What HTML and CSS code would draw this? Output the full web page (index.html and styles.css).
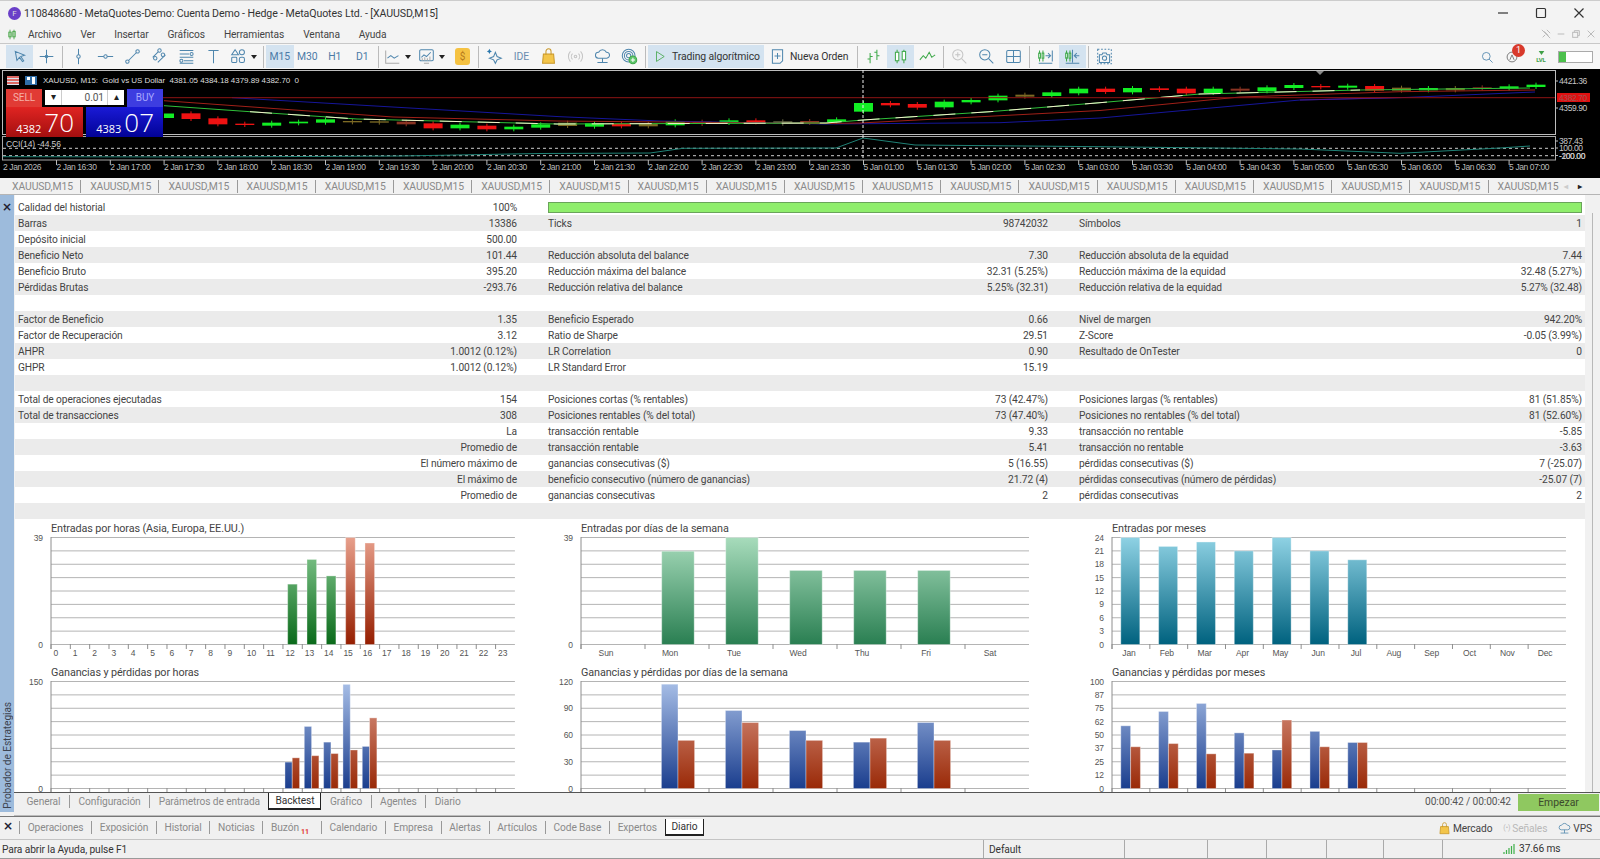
FILE: index.html
```html
<!DOCTYPE html>
<html lang="es">
<head>
  <meta charset="utf-8">
  <title>MetaTrader 5</title>
  <link rel="stylesheet" href="styles.css">
</head>
<body>

  <div class="titlebar">
    <span class="app-logo">F</span>
    <span class="title-text">110848680 - MetaQuotes-Demo: Cuenta Demo - Hedge - MetaQuotes Ltd. - [XAUUSD,M15]</span>
    <div class="win-buttons">
      <svg viewBox="0 0 12 12"><path d="M1 6h10"/></svg>
      <svg viewBox="0 0 12 12"><rect x="1.5" y="1.5" width="9" height="9" rx="1"/></svg>
      <svg viewBox="0 0 12 12"><path d="M1.5 1.5l9 9M10.5 1.5l-9 9"/></svg>
    </div>
  </div>

  <div class="menubar">
    <svg class="menu-logo" viewBox="0 0 10 12"><path d="M2.5 0v12M7.5 0v12"/><rect x="1" y="3" width="3" height="6"/><rect x="6" y="2" width="3" height="7"/></svg>
    <span>Archivo</span><span>Ver</span><span>Insertar</span><span>Gráficos</span><span>Herramientas</span><span>Ventana</span><span>Ayuda</span>
    <div class="child-buttons">
      <svg viewBox="0 0 12 12"><path d="M2 10l3-3M4 3l5 5M7 1l4 4M1 1l10 10"/></svg>
      <svg viewBox="0 0 12 12"><path d="M2 6h8"/></svg>
      <svg viewBox="0 0 12 12"><rect x="2" y="4" width="6" height="6"/><path d="M4 4V2h6v6H8"/></svg>
      <svg viewBox="0 0 12 12"><path d="M2 2l8 8M10 2l-8 8"/></svg>
    </div>
  </div>

  <div class="toolbar">
    <div class="tool active"><svg class="ico" viewBox="0 0 20 20"><path d="M5 4l11 4.500-4.500 1.500 3.500 5-1.500 1-3.500-5-3 3.500z"/></svg></div>
    <div class="tool"><svg class="ico" viewBox="0 0 20 20"><path d="M10 2v16M2 10h16"/><circle cx="10" cy="10" r="1.5"/></svg></div>
    <i class="sep"></i>
    <div class="tool"><svg class="ico" viewBox="0 0 20 20"><path d="M10 1v18"/><circle class="dot" cx="10" cy="10" r="2"/></svg></div>
    <div class="tool"><svg class="ico" viewBox="0 0 20 20"><path d="M1 10h18"/><circle class="dot" cx="10" cy="10" r="2"/></svg></div>
    <div class="tool"><svg class="ico" viewBox="0 0 20 20"><path d="M5 15L15 5"/><circle class="dot" cx="4" cy="16" r="2"/><circle class="dot" cx="16" cy="4" r="2"/></svg></div>
    <div class="tool"><svg class="ico" viewBox="0 0 20 20"><path d="M2 11l7-7M8 17l9-9"/><circle class="dot" cx="10" cy="3" r="2"/><circle class="dot" cx="5" cy="12" r="2"/><circle class="dot" cx="14" cy="8" r="2"/></svg></div>
    <div class="tool"><svg class="ico" viewBox="0 0 20 20"><path d="M2 3h16M2 7h11M2 11h16M7 15h11M2 18h16"/><circle class="dot" cx="16" cy="7" r="1.8"/><circle class="dot" cx="4" cy="15" r="1.8"/></svg></div>
    <div class="tool"><svg class="ico" viewBox="0 0 20 20"><path d="M4 3h12M10 3v15"/></svg></div>
    <div class="tool sm"><svg class="ico" viewBox="0 0 20 20"><path d="M6 2l4 6H2z"/><circle cx="14" cy="5" r="3"/><rect x="2" y="11" width="6" height="6" rx="1"/><rect x="11" y="11" width="6" height="6" rx="2"/></svg></div>
    <div class="caret"></div>
    <i class="sep"></i>
    <div class="tool tf active">M15</div>
    <div class="tool tf">M30</div>
    <div class="tool tf">H1</div>
    <div class="tool tf">D1</div>
    <i class="sep"></i>
    <div class="tool sm"><svg class="ico" viewBox="0 0 20 20"><path d="M2 3v15h16" class="grey"/><path d="M4 12l4-3 4 3 5-3"/></svg></div>
    <div class="caret"></div>
    <div class="tool sm"><svg class="ico" viewBox="0 0 20 20"><rect x="2" y="2" width="16" height="13" rx="1.5"/><path d="M4 11l3-3 3 2 5-5"/><path class="grey" d="M5 15v-3M8 15v-4M11 15v-3M14 15v-5M7 18h6"/></svg></div>
    <div class="caret"></div>
    <div class="tool"><span class="coin">$</span></div>
    <i class="sep"></i>
    <div class="tool"><svg class="ico" viewBox="0 0 20 20"><path d="M11 5l2 5 5 2-5 2-2 4-2-4-5-2 5-2z"/><path class="solid" d="M4 1l1 2 2 1-2 1-1 2-1-2-2-1 2-1z"/></svg></div>
    <div class="tool ide">IDE</div>
    <div class="tool"><svg class="ico bag" viewBox="0 0 20 20"><path class="bag-fill" d="M4 7h12l1 11H3z"/><path d="M7 8V4a3 3 0 0 1 6 0v4"/></svg></div>
    <div class="tool"><svg class="ico faded" viewBox="0 0 20 20"><circle cx="10" cy="10" r="1.5"/><path d="M6.5 6.5a5 5 0 0 0 0 7M13.5 6.5a5 5 0 0 1 0 7M4 4a9 9 0 0 0 0 12M16 4a9 9 0 0 1 0 12"/></svg></div>
    <div class="tool"><svg class="ico" viewBox="0 0 20 20"><path d="M5 12a3.5 3.5 0 0 1 .5-7 5 5 0 0 1 9 0 3.5 3.5 0 0 1 .5 7z"/><path d="M10 12v5M4 17h12"/></svg></div>
    <div class="tool"><svg class="ico" viewBox="0 0 20 20"><circle cx="9" cy="9" r="7.5"/><circle cx="9" cy="9" r="5"/><circle cx="9" cy="9" r="2.5"/><circle class="plus-disc" cx="14" cy="14" r="4.5"/><path class="plus" d="M14 11.5v5M11.5 14h5"/></svg></div>
    <i class="sep"></i>
    <div class="tool algo active"><svg class="ico play" viewBox="0 0 20 20"><path d="M5 3l11 7-11 7z"/></svg><span>Trading algorítmico</span></div>
    <div class="tool order"><svg class="ico" viewBox="0 0 20 20"><path d="M4 2h12v13l-3 3H4z"/><path d="M10 6v7M6.5 9.5h7"/></svg><span>Nueva Orden</span></div>
    <i class="sep"></i>
    <div class="tool"><svg class="ico green" viewBox="0 0 20 20"><path d="M6 6v12M3 13h3M6 10h3M14 2v12M11 5h3M14 9h3"/></svg></div>
    <div class="tool active"><svg class="ico green" viewBox="0 0 20 20"><path d="M6 2v16M14 2v16"/><rect class="white" x="4" y="5" width="4" height="10"/><rect class="white" x="12" y="4" width="4" height="10"/></svg></div>
    <div class="tool"><svg class="ico green" viewBox="0 0 20 20"><path d="M1 14l4-5 3 3 4-7 3 6 4-3"/></svg></div>
    <i class="sep"></i>
    <div class="tool"><svg class="ico faded" viewBox="0 0 20 20"><circle cx="8" cy="8" r="6"/><path d="M12.5 12.5L18 18M8 5v6M5 8h6"/></svg></div>
    <div class="tool"><svg class="ico" viewBox="0 0 20 20"><circle cx="8" cy="8" r="6"/><path d="M12.5 12.5L18 18M5 8h6"/></svg></div>
    <div class="tool"><svg class="ico" viewBox="0 0 20 20"><rect x="2" y="3" width="16" height="14" rx="1.5"/><path d="M10 3v14M2 10h16"/></svg></div>
    <i class="sep"></i>
    <div class="tool"><svg class="ico green" viewBox="0 0 20 20"><path d="M3 3v13M7 3v13"/><rect class="white" x="2" y="6" width="2" height="6"/><rect class="white" x="6" y="6" width="2" height="6"/><path class="blue" d="M10 9h6M13 6l3 3-3 3M18 3v13M2 18h16"/></svg></div>
    <div class="tool active"><svg class="ico green" viewBox="0 0 20 20"><path d="M3 3v13M7 3v13"/><rect class="white" x="2" y="6" width="2" height="6"/><rect class="white" x="6" y="6" width="2" height="6"/><path class="blue" d="M18 9h-5M15 6l-3 3 3 3M10 2v15M2 18h16"/></svg></div>
    <i class="sep"></i>
    <div class="tool"><svg class="ico" viewBox="0 0 20 20"><rect class="dashed" x="2" y="1.5" width="16" height="17"/><path d="M4 8h3l1-2h4l1 2h3v9H4z"/><circle cx="10" cy="12" r="2.5"/></svg></div>
    <div class="toolbar-right">
      <svg class="ico search" viewBox="0 0 20 20"><circle cx="9" cy="9" r="5.5"/><path d="M13 13l5 5"/></svg>
      <div class="notify">
        <svg class="ico grey-ico" viewBox="0 0 20 20"><circle cx="10" cy="10" r="7"/><path d="M7 14l3-7 3 7"/></svg>
        <span class="badge">1</span>
      </div>
      <div class="lvl"><svg viewBox="0 0 10 8"><path d="M1 1h8L5 7z"/></svg><span>LVL</span></div>
      <div class="battery"><i></i></div>
    </div>
  </div>

  <div class="market">
    <svg id="marketChart" class="market-svg" viewBox="0 69 1600 109" width="1600" height="109"></svg>
    <div class="legend">
      <svg viewBox="0 0 12 9"><rect width="12" height="9" fill="#d9e4ef"/><path d="M0 1h12M0 4h12M0 7h12" stroke="#e0433a" stroke-width="1.5"/></svg>
      <svg viewBox="0 0 12 9"><rect width="12" height="9" fill="#2f6ea8"/><rect x="2" y="1" width="3" height="3" fill="#fff"/><rect x="7" y="1" width="3" height="7" fill="#fff"/></svg>
      <span>XAUUSD, M15:&nbsp; Gold vs US Dollar&nbsp; 4381.05 4384.18 4379.89 4382.70&nbsp; 0</span>
    </div>
    <div class="trade-panel">
      <div class="trade-top">
        <div class="trade-btn sell">SELL</div>
        <div class="lot">
          <span class="lot-arrow">▾</span>
          <span class="lot-value">0.01</span>
          <span class="lot-arrow">▴</span>
        </div>
        <div class="trade-btn buy">BUY</div>
      </div>
      <div class="trade-prices">
        <div class="price red"><small>4382</small><b>70</b></div>
        <div class="price blue"><small>4383</small><b>07</b></div>
      </div>
    </div>
    <div class="cci-label">CCI(14) -44.56</div>
  </div>

  <div class="chart-tabs">
    <span>XAUUSD,M15</span><span>XAUUSD,M15</span><span>XAUUSD,M15</span><span>XAUUSD,M15</span><span>XAUUSD,M15</span>
    <span>XAUUSD,M15</span><span>XAUUSD,M15</span><span>XAUUSD,M15</span><span>XAUUSD,M15</span><span>XAUUSD,M15</span>
    <span>XAUUSD,M15</span><span>XAUUSD,M15</span><span>XAUUSD,M15</span><span>XAUUSD,M15</span><span>XAUUSD,M15</span>
    <span>XAUUSD,M15</span><span>XAUUSD,M15</span><span>XAUUSD,M15</span><span>XAUUSD,M15</span><span>XAUUSD,M15</span>
    <div class="tab-arrows"><b class="off">◂</b><b>▸</b></div>
  </div>

  <div class="tester">
    <div class="side-strip">
      <span class="close-x">×</span>
      <span class="side-label">Probador de Estrategias</span>
    </div>
    <div class="tester-main">
      <div class="report-wrap">
        <div class="report">
          <div class="row">
            <div class="cell"><span>Calidad del historial</span><span>100%</span></div>
            <div class="quality"></div>
          </div>
          <div class="row">
            <div class="cell"><span>Barras</span><span>13386</span></div>
            <div class="cell"><span>Ticks</span><span>98742032</span></div>
            <div class="cell"><span>Símbolos</span><span>1</span></div>
          </div>
          <div class="row">
            <div class="cell"><span>Depósito inicial</span><span>500.00</span></div>
            <div class="cell"></div><div class="cell"></div>
          </div>
          <div class="row">
            <div class="cell"><span>Beneficio Neto</span><span>101.44</span></div>
            <div class="cell"><span>Reducción absoluta del balance</span><span>7.30</span></div>
            <div class="cell"><span>Reducción absoluta de la equidad</span><span>7.44</span></div>
          </div>
          <div class="row">
            <div class="cell"><span>Beneficio Bruto</span><span>395.20</span></div>
            <div class="cell"><span>Reducción máxima del balance</span><span>32.31 (5.25%)</span></div>
            <div class="cell"><span>Reducción máxima de la equidad</span><span>32.48 (5.27%)</span></div>
          </div>
          <div class="row">
            <div class="cell"><span>Pérdidas Brutas</span><span>-293.76</span></div>
            <div class="cell"><span>Reducción relativa del balance</span><span>5.25% (32.31)</span></div>
            <div class="cell"><span>Reducción relativa de la equidad</span><span>5.27% (32.48)</span></div>
          </div>
          <div class="row"></div>
          <div class="row">
            <div class="cell"><span>Factor de Beneficio</span><span>1.35</span></div>
            <div class="cell"><span>Beneficio Esperado</span><span>0.66</span></div>
            <div class="cell"><span>Nivel de margen</span><span>942.20%</span></div>
          </div>
          <div class="row">
            <div class="cell"><span>Factor de Recuperación</span><span>3.12</span></div>
            <div class="cell"><span>Ratio de Sharpe</span><span>29.51</span></div>
            <div class="cell"><span>Z-Score</span><span>-0.05 (3.99%)</span></div>
          </div>
          <div class="row">
            <div class="cell"><span>AHPR</span><span>1.0012 (0.12%)</span></div>
            <div class="cell"><span>LR Correlation</span><span>0.90</span></div>
            <div class="cell"><span>Resultado de OnTester</span><span>0</span></div>
          </div>
          <div class="row">
            <div class="cell"><span>GHPR</span><span>1.0012 (0.12%)</span></div>
            <div class="cell"><span>LR Standard Error</span><span>15.19</span></div>
            <div class="cell"></div>
          </div>
          <div class="row"></div>
          <div class="row">
            <div class="cell"><span>Total de operaciones ejecutadas</span><span>154</span></div>
            <div class="cell"><span>Posiciones cortas (% rentables)</span><span>73 (42.47%)</span></div>
            <div class="cell"><span>Posiciones largas (% rentables)</span><span>81 (51.85%)</span></div>
          </div>
          <div class="row">
            <div class="cell"><span>Total de transacciones</span><span>308</span></div>
            <div class="cell"><span>Posiciones rentables (% del total)</span><span>73 (47.40%)</span></div>
            <div class="cell"><span>Posiciones no rentables (% del total)</span><span>81 (52.60%)</span></div>
          </div>
          <div class="row">
            <div class="cell"><span></span><span>La</span></div>
            <div class="cell"><span>transacción rentable</span><span>9.33</span></div>
            <div class="cell"><span>transacción no rentable</span><span>-5.85</span></div>
          </div>
          <div class="row">
            <div class="cell"><span></span><span>Promedio de</span></div>
            <div class="cell"><span>transacción rentable</span><span>5.41</span></div>
            <div class="cell"><span>transacción no rentable</span><span>-3.63</span></div>
          </div>
          <div class="row">
            <div class="cell"><span></span><span>El número máximo de</span></div>
            <div class="cell"><span>ganancias consecutivas ($)</span><span>5 (16.55)</span></div>
            <div class="cell"><span>pérdidas consecutivas ($)</span><span>7 (-25.07)</span></div>
          </div>
          <div class="row">
            <div class="cell"><span></span><span>El máximo de</span></div>
            <div class="cell"><span>beneficio consecutivo (número de ganancias)</span><span>21.72 (4)</span></div>
            <div class="cell"><span>pérdidas consecutivas (número de pérdidas)</span><span>-25.07 (7)</span></div>
          </div>
          <div class="row">
            <div class="cell"><span></span><span>Promedio de</span></div>
            <div class="cell"><span>ganancias consecutivas</span><span>2</span></div>
            <div class="cell"><span>pérdidas consecutivas</span><span>2</span></div>
          </div>
          <div class="row"></div>

          <div class="charts">
            <div class="stat-chart"><h4>Entradas por horas (Asia, Europa, EE.UU.)</h4><svg id="chartHours"></svg></div>
            <div class="stat-chart"><h4>Entradas por días de la semana</h4><svg id="chartDays"></svg></div>
            <div class="stat-chart"><h4>Entradas por meses</h4><svg id="chartMonths"></svg></div>
            <div class="stat-chart"><h4>Ganancias y pérdidas por horas</h4><svg id="plHours"></svg></div>
            <div class="stat-chart"><h4>Ganancias y pérdidas por días de la semana</h4><svg id="plDays"></svg></div>
            <div class="stat-chart"><h4>Ganancias y pérdidas por meses</h4><svg id="plMonths"></svg></div>
          </div>
        </div>
        <div class="report-scroll"><i></i></div>
      </div>

      <div class="tester-tabs tabs">
        <span class="tab">General</span>
        <span class="tab">Configuración</span>
        <span class="tab">Parámetros de entrada</span>
        <span class="tab on">Backtest</span>
        <span class="tab">Gráfico</span>
        <span class="tab">Agentes</span>
        <span class="tab">Diario</span>
        <span class="timer">00:00:42 / 00:00:42</span>
        <button class="start-btn">Empezar</button>
      </div>
    </div>
  </div>

  <div class="bottom-tabs tabs">
    <span class="close-x dark">×</span>
    <span class="tab">Operaciones</span>
    <span class="tab">Exposición</span>
    <span class="tab">Historial</span>
    <span class="tab">Noticias</span>
    <span class="tab mail">Buzón<sub>11</sub></span>
    <span class="tab">Calendario</span>
    <span class="tab">Empresa</span>
    <span class="tab">Alertas</span>
    <span class="tab">Artículos</span>
    <span class="tab">Code Base</span>
    <span class="tab">Expertos</span>
    <span class="tab on">Diario</span>
    <div class="services">
      <span><svg class="ico bag" viewBox="0 0 20 20"><path class="bag-fill" d="M4 7h12l1 11H3z"/><path d="M7 8V4a3 3 0 0 1 6 0v4"/></svg>Mercado</span>
      <span class="off"><small>(•)</small> Señales</span>
      <span><svg class="ico" viewBox="0 0 20 20"><path d="M5 12a3.5 3.5 0 0 1 .5-7 5 5 0 0 1 9 0 3.5 3.5 0 0 1 .5 7z"/><path d="M10 12v5M4 17h12"/></svg>VPS</span>
    </div>
  </div>

  <div class="statusbar">
    <div>Para abrir la Ayuda, pulse F1</div>
    <div>Default</div>
    <div></div><div></div><div></div><div></div><div></div>
    <div class="ping"><svg viewBox="0 0 12 10"><path d="M1 10V8M3.5 10V6M6 10V4M8.5 10V2M11 10V0"/></svg>37.66 ms</div>
  </div>

  <script src="script.js"></script>
</body>
</html>
```

FILE: styles.css
```css
* {
  box-sizing: border-box;
}

html, body {
  margin: 0;
  width: 1600px;
  height: 859px;
  overflow: hidden;
}

body {
  font-family: Roboto, sans-serif;
  font-size: 10.2px;
  letter-spacing: -0.1px;
  color: #444;
  background-color: #f1f1f1;
}

/* title + menu */
.titlebar {
  height: 27px;
  display: flex;
  align-items: center;
  padding: 0 0 2px 8px;
  background-color: #f3f3f3;
  border-top: 1px solid #ccc;
}

.app-logo {
  width: 13px;
  height: 13px;
  border-radius: 50%;
  background-color: #6a3fc8;
  color: #ddd;
  font-size: 8px;
  line-height: 13px;
  text-align: center;
  margin-right: 3px;
}

.title-text {
  font-size: 10.6px;
  color: #333;
}

.win-buttons {
  margin-left: auto;
  display: flex;
  gap: 26px;
  padding-right: 15px;
}

.win-buttons svg {
  width: 12px;
  height: 12px;
  fill: none;
  stroke: #333;
  stroke-width: 1.2;
}

.menubar {
  height: 17px;
  display: flex;
  align-items: center;
  gap: 19px;
  padding: 0 0 2px 28px;
  position: relative;
  background-color: #f3f3f3;
  border-bottom: 1px solid #c8c8c8;
  color: #444;
}

.menu-logo {
  width: 8px;
  height: 11px;
  position: absolute;
  left: 8px;
  top: 2px;
  fill: none;
  stroke: #3aa03a;
}

.child-buttons {
  margin-left: auto;
  display: flex;
  gap: 5px;
  padding-right: 4px;
}

.child-buttons svg {
  width: 10px;
  height: 10px;
  fill: none;
  stroke: #bbb;
  stroke-width: 1.2;
}

/* toolbar */
.toolbar {
  height: 25px;
  display: flex;
  align-items: center;
  padding-left: 6px;
  background-color: #f6f6f6;
}

.tool {
  width: 27px;
  height: 23px;
  flex: none;
  display: flex;
  align-items: center;
  justify-content: center;
  font-size: 10.4px;
  color: #4b7aa6;
}

.tool.sm {
  width: 23px;
}

.tool.tf {
  width: 27.5px;
}

.tool.active {
  background-color: #d4e3f0;
}

.caret {
  width: 11px;
  flex: none;
  height: 4px;
  position: relative;
}

.caret::after {
  content: "";
  position: absolute;
  left: 1px;
  top: 0;
  border-left: 3px solid transparent;
  border-right: 3px solid transparent;
  border-top: 4px solid #222;
}

.sep {
  width: 1px;
  height: 22px;
  flex: none;
  margin: 0 2px;
  background-color: #bbb;
}

.ico {
  width: 17px;
  height: 17px;
  fill: none;
  stroke: #4f86ad;
  stroke-width: 1.2;
}

.ico .dot {
  fill: #f6f6f6;
}

.ico .grey {
  stroke: #aaa;
}

.ico .solid {
  fill: #2b78ad;
  stroke: none;
}

.ico.faded {
  stroke: #c4c4c4;
}

.ico.bag {
  stroke: #c9982a;
}

.ico .bag-fill {
  fill: #f3c54a;
}

.ico.green {
  stroke: #3da848;
}

.ico .white {
  fill: #fff;
}

.ico .blue {
  stroke: #4f86ad;
}

.ico .plus-disc {
  fill: #5ec46a;
  stroke: #3da848;
}

.ico .plus {
  stroke: #fff;
}

.ico.play {
  stroke: #47a84f;
  width: 14px;
}

.ico .dashed {
  stroke-dasharray: 2 2;
}

.coin {
  width: 15px;
  height: 17px;
  border-radius: 3px;
  background-color: #f5c242;
  color: #b5791a;
  font-size: 10px;
  line-height: 17px;
  text-align: center;
}

.ide {
  color: #6a8caf;
}

.tool.algo {
  width: 116px;
  justify-content: flex-start;
  padding-left: 5px;
  gap: 5px;
  color: #333;
}

.tool.order {
  width: 91px;
  justify-content: flex-start;
  padding-left: 5px;
  gap: 4px;
  color: #333;
}

.toolbar-right {
  margin-left: auto;
  display: flex;
  align-items: center;
  padding-right: 7px;
}

.search {
  width: 14px;
  height: 14px;
}

.notify {
  margin-left: 11px;
  width: 26px;
  position: relative;
}

.grey-ico {
  stroke: #666;
  width: 14px;
  height: 14px;
  display: block;
}

.badge {
  position: absolute;
  left: 7px;
  top: -6px;
  width: 13px;
  height: 13px;
  border-radius: 50%;
  background-color: #d8392b;
  color: #fff;
  font-size: 9px;
  line-height: 13px;
  text-align: center;
}

.lvl {
  width: 20px;
  margin-right: 7px;
  color: #3fa048;
  font-size: 6px;
  line-height: 7px;
  text-align: center;
  font-weight: 700;
}

.lvl svg {
  display: block;
  width: 7px;
  height: 6px;
  margin: 0 auto;
  fill: #3fa048;
}

.battery {
  width: 35px;
  height: 12px;
  border: 1px solid #aaa;
  background-color: #fff;
}

.battery i {
  display: block;
  width: 7px;
  height: 100%;
  background-color: #4cc04c;
}

/* chart */
.market {
  height: 109px;
  position: relative;
  background-color: #000;
  overflow: hidden;
}

.market-svg {
  display: block;
  font-family: "Liberation Sans", sans-serif;
  font-size: 8.5px;
  letter-spacing: -0.4px;
}

.legend {
  position: absolute;
  left: 7px;
  top: 7px;
  display: flex;
  align-items: center;
  gap: 6px;
  color: #ddd;
  font-family: "Liberation Sans", sans-serif;
  font-size: 8px;
  letter-spacing: -0.05px;
}

.legend svg {
  width: 12px;
  height: 9px;
}

.trade-panel {
  position: absolute;
  left: 6px;
  top: 20px;
  width: 157px;
}

.trade-top {
  display: flex;
  height: 18px;
  justify-content: space-between;
}

.trade-btn {
  width: 36px;
  color: #f6b0a8;
  font-size: 10px;
  line-height: 18px;
  text-align: center;
}

.trade-btn.sell {
  background-color: #e13b35;
}

.trade-btn.buy {
  background-color: #3d3de0;
  color: #a8a8ff;
}

.lot {
  width: 81px;
  height: 17px;
  display: flex;
  background-color: #fff;
  border: 1px solid #000;
  color: #555;
}

.lot-arrow {
  width: 16px;
  text-align: center;
  line-height: 14px;
  color: #222;
}

.lot-value {
  flex: 1;
  text-align: right;
  padding-right: 3px;
  line-height: 15px;
  border-left: 1px solid #ccc;
  border-right: 1px solid #ccc;
}

.trade-prices {
  display: flex;
  justify-content: space-between;
  height: 30px;
}

.price {
  width: 77px;
  color: #fff;
  display: flex;
  align-items: flex-end;
  justify-content: flex-end;
  padding-right: 9px;
  font-family: "Open Sans", sans-serif;
  letter-spacing: 0;
  line-height: 1;
}

.price small {
  font-size: 11px;
  margin-right: 3px;
  padding-bottom: 3px;
}

.price b {
  font-size: 26px;
  font-weight: 300;
  padding-bottom: 2px;
}

.price.red {
  background: linear-gradient(#e02422, #a30f0f);
}

.price.blue {
  background: linear-gradient(#1a1ad6, #020296);
}

.cci-label {
  position: absolute;
  left: 6px;
  top: 70px;
  color: #ccc;
  font-family: "Liberation Sans", sans-serif;
  font-size: 8.5px;
}

/* chart tabs strip */
.chart-tabs {
  height: 17px;
  display: flex;
  align-items: center;
  padding-left: 3px;
  color: #8a8a8a;
  font-size: 10.4px;
  background-color: #f1f1f1;
  border-bottom: 1px solid #b5b5b5;
}

.chart-tabs span {
  width: 78.2px;
  flex: none;
  line-height: 12px;
  padding: 1px 0 0 9px;
  white-space: nowrap;
  border-right: 1px solid #999;
}

.chart-tabs span:nth-of-type(20) {
  border-right: none;
}

.tab-arrows {
  display: flex;
  gap: 10px;
  font-size: 8px;
  color: #222;
  margin-left: -3px;
}

.tab-arrows .off {
  color: #ccc;
}

/* strategy tester */
.tester {
  height: 621px;
  display: flex;
}

.side-strip {
  width: 14px;
  height: 617px;
  margin-right: 1px;
  flex: none;
  display: flex;
  flex-direction: column;
  justify-content: space-between;
  align-items: center;
  background-color: #9dbbdc;
}

.close-x {
  font-family: "DejaVu Sans", sans-serif;
  font-size: 12px;
  font-weight: 700;
  line-height: 24px;
  color: #223;
}

.side-label {
  writing-mode: vertical-rl;
  transform: rotate(180deg);
  white-space: nowrap;
  font-size: 10.2px;
  color: #3d4450;
  padding-top: 3px;
}

.tester-main {
  flex: 1;
  min-width: 0;
  display: flex;
  flex-direction: column;
}

.report-wrap {
  height: 597px;
  display: flex;
  overflow: hidden;
}

.report {
  width: 1570px;
  flex: none;
  background-color: #fff;
  padding-top: 4px;
}

.report-scroll {
  flex: 1;
  padding: 18px 0 0 7px;
}

.report-scroll i {
  display: block;
  width: 1px;
  height: 100%;
  background-color: #b8b8b8;
}

/* stats table */
.row {
  height: 16px;
  display: grid;
  grid-template-columns: 499px 500px 503px;
  column-gap: 31px;
  padding: 1px 3px 0;
  line-height: 15px;
  color: #444;
}

.row:nth-child(even) {
  background-color: #ebebeb;
}

.cell {
  display: flex;
  justify-content: space-between;
  white-space: nowrap;
}

.quality {
  grid-column: 2 / 4;
  height: 11px;
  margin-top: 2px;
  background-color: #8fee6c;
  border: 1px solid #6aa45a;
}

/* stat charts */
.charts {
  height: 273px;
  overflow: hidden;
  display: grid;
  grid-template-columns: 530px 531px 509px;
  grid-auto-rows: 144px;
}

.stat-chart h4 {
  margin: 0;
  height: 18px;
  padding-left: 36px;
  font-size: 10.8px;
  font-weight: 400;
  line-height: 20px;
  color: #444;
}

.stat-chart svg {
  display: block;
  width: 100%;
  height: 126px;
  overflow: visible;
}

.grid-line {
  stroke: #b4b4b4;
  stroke-width: 1;
}

.axis-line {
  stroke: #8e8e8e;
  stroke-width: 1;
}

.axis-text {
  font-family: "Liberation Sans", sans-serif;
  font-size: 8.5px;
  fill: #555;
}

.bar {
  stroke: rgba(255, 255, 255, 0.35);
  stroke-width: 1;
}

/* tab bars */
.tabs {
  display: flex;
  align-items: flex-start;
  height: 24px;
  font-size: 10.2px;
  color: #8a8a8a;
  background-color: #f0f0f0;
}

.tester-tabs {
  border-top: 1px solid #555;
  border-bottom: 1px solid #bcbcbc;
  padding-left: 4px;
  margin-left: -1px;
  position: relative;
}

.tab {
  flex: none;
  padding: 0 8.5px;
  margin-top: 2px;
  height: 13px;
  line-height: 13px;
  white-space: nowrap;
  border-left: 1px solid #999;
}

.tab:first-of-type,
.tab.on,
.tab.on + .tab {
  border-left: none;
}

.tab.on {
  margin-top: 0;
  height: 17px;
  padding: 0 6px;
  line-height: 15px;
  background-color: #fff;
  color: #333;
  border: 1px solid #222;
  border-top: none;
  border-bottom-width: 2px;
}

.timer {
  margin: 2px 7px 0 auto;
  color: #555;
  line-height: 14px;
}

.start-btn {
  width: 81px;
  height: 17px;
  margin: 1px 1px 0 0;
  padding: 0;
  border: none;
  background-color: #8fc860;
  color: #3c4a2c;
  font-family: Roboto, sans-serif;
  font-size: 10.4px;
}

.bottom-tabs {
  padding-top: 2px;
  position: relative;
  border-top: 1px solid #777;
  border-bottom: 1px solid #c4c4c4;
}

.close-x.dark {
  width: 15px;
  padding-left: 1px;
  text-align: center;
  line-height: 14px;
  margin-right: 4px;
}

.bottom-tabs .tab {
  margin-top: 2px;
  padding: 0 7.7px;
}

.bottom-tabs .tab:first-of-type {
  padding-left: 8.5px;
}

.bottom-tabs .tab.on {
  margin-top: 0;
  padding: 0 6px;
  line-height: 16px;
}

.bottom-tabs .mail {
  padding-right: 12px;
}

.mail sub {
  color: #e0342c;
  font-size: 7px;
  margin-left: 2px;
  vertical-align: -3px;
  font-weight: 700;
}

.services {
  margin-left: auto;
  display: flex;
  align-items: center;
  gap: 11px;
  padding-right: 8px;
  color: #444;
  height: 18px;
}

.services span {
  display: flex;
  align-items: center;
  gap: 2px;
}

.services .ico {
  width: 13px;
  height: 13px;
}

.services .off {
  color: #b8b8b8;
}

.services small {
  font-size: 7px;
}

/* status bar */
.statusbar {
  height: 19px;
  display: grid;
  grid-template-columns: 984px 141px 83px 59px 60px 57px 59px 55px 1fr;
  align-items: center;
  color: #333;
  background-color: #f0f0f0;
  border-bottom: 1px solid #9a9a9a;
  white-space: nowrap;
}

.statusbar div {
  height: 18px;
  line-height: 20px;
  padding-left: 2px;
  border-right: 1px solid #aaa;
}

.statusbar div:nth-child(2) {
  padding-left: 5px;
}

.statusbar .ping {
  grid-column: 9;
  border-right: none;
  padding-left: 5px;
  display: flex;
  align-items: center;
  gap: 4px;
}

.ping svg {
  width: 12px;
  height: 10px;
  fill: none;
  stroke: #3fb04a;
  stroke-width: 1.2;
}
```

FILE: script.js
```js
const SVG_NS = "http://www.w3.org/2000/svg";

function add(parent, tag, attrs, text) {
  const el = document.createElementNS(SVG_NS, tag);
  for (const key in attrs) {
    el.setAttribute(key, attrs[key]);
  }
  if (text !== undefined) {
    el.textContent = text;
  }
  parent.appendChild(el);
  return el;
}

/* ---- price chart, coordinates are page pixels (see viewBox) ---- */

const CANDLE_COLORS = { g: "#12ee24", r: "#ee1212", o: "#7d6a24", d: "#8a3322", y: "#6f6f4a" };

// color, body top, body bottom (y * 3, read off the screen)
const candles = [
  ["r", 340, 357], ["r", 355, 373], ["r", 371, 375], ["g", 368, 377], ["g", 365, 370], ["g", 358, 368],
  ["o", 363, 367], ["o", 364, 368], ["d", 365, 373], ["r", 370, 385], ["g", 374, 385], ["r", 377, 388],
  ["g", 380, 388], ["g", 373, 383], ["o", 368, 378], ["g", 370, 380], ["r", 371, 379], ["o", 372, 379],
  ["g", 364, 376], ["d", 365, 372], ["g", 361, 369], ["r", 361, 367], ["y", 364, 371], ["d", 363, 369],
  ["g", 358, 366], ["g", 309, 335], ["r", 309, 316], ["r", 312, 323], ["g", 305, 322], ["g", 300, 307],
  ["g", 287, 301], ["o", 284, 290], ["g", 277, 288], ["g", 266, 280], ["r", 266, 276], ["g", 264, 277],
  ["r", 265, 270], ["r", 266, 280], ["g", 266, 279], ["d", 266, 272], ["g", 262, 274], ["g", 255, 264],
  ["r", 258, 262], ["g", 257, 263], ["r", 258, 272], ["o", 263, 272], ["g", 264, 271], ["o", 264, 271],
  ["d", 262, 265], ["g", 259, 266], ["g", 254, 261]
];

const candleX = (n) => 191 + 26.9 * n;

function drawMarket() {
  const svg = document.getElementById("marketChart");

  // first candle is cut by the trade panel
  add(svg, "rect", { x: 164, y: 113.5, width: 10, height: 4.5, fill: CANDLE_COLORS.g });

  candles.forEach(([color, top, bottom], n) => {
    const x = candleX(n);
    const fill = CANDLE_COLORS[color];
    add(svg, "rect", { x: x - 0.5, y: top / 3 - 2, width: 1, height: (bottom - top) / 3 + 4, fill });
    add(svg, "rect", { x: x - 9.5, y: top / 3, width: 19, height: (bottom - top) / 3, fill });
  });

  // moving averages
  const line = (points, stroke, extra) => add(svg, "polyline", Object.assign({ points, stroke, fill: "none", "stroke-width": 1 }, extra));
  line("232,97.7 560,116.7 660,121 826,124 1000,122.7 1100,118 1300,100 1400,97.7 1535,92", "#16169a");
  line("1300,100 1400,97.5", "#4a1a8a");
  line("164,100.7 393,117 557,121 826,123.5 860,123 1100,110.5 1240,97 1400,91.7 1535,90", "#a02018");
  line("164,105.7 250,111.7 357,119 464,121.7 557,124 826,123 863,120 990,111.7 1100,102.7 1200,94 1360,90 1530,88", "#2fc03a");
  line("250,111.7 357,119 464,121.7 557,124 826,123 863,120 990,111.7 1100,102.7 1200,94 1360,90", "#f4eecc", { "stroke-dasharray": "22 16" });

  // price line + pane frames
  add(svg, "line", { x1: 161, x2: 1555, y1: 97.7, y2: 97.7, stroke: "#8e1414" });
  add(svg, "rect", { x: 2.5, y: 70.5, width: 1553, height: 64, fill: "none", stroke: "#bdbdbd" });
  add(svg, "rect", { x: 2.5, y: 136.5, width: 1553, height: 23.5, fill: "none", stroke: "#a8a8a8" });

  // CCI pane
  add(svg, "line", { x1: 3, x2: 1555, y1: 148.3, y2: 148.3, stroke: "#ccc", "stroke-dasharray": "3 3" });
  add(svg, "line", { x1: 3, x2: 1555, y1: 155.7, y2: 155.7, stroke: "#ccc", "stroke-dasharray": "3 3" });
  line("3,156.7 200,157 400,156 540,153.5 650,153 683,148.3 836,148 863,138 915,145 1100,146.7 1300,149 1400,153.3 1500,148 1530,146", "#1f8276");

  // crosshair and scroll mark
  add(svg, "line", { x1: 863, x2: 863, y1: 70, y2: 160, stroke: "#eee", "stroke-dasharray": "3 2" });
  add(svg, "polygon", { points: "1316,71 1324,71 1320,75", fill: "#888" });

  // right scale
  [["4421.36", 84], ["4359.90", 111], ["387.43", 144], ["100.00", 151], ["-100.00", 158.5], ["-200.00", 158.5]].forEach(([label, y]) => {
    add(svg, "line", { x1: 1555, x2: 1558, y1: y - 3, y2: y - 3, stroke: "#bbb" });
    add(svg, "text", { x: 1559, y, fill: "#c8c8c8" }, label);
  });
  add(svg, "rect", { x: 1557, y: 93, width: 33, height: 9, fill: "#e01010" });
  add(svg, "text", { x: 1559, y: 100.5, fill: "#a05050" }, "4382.70");

  // time axis
  add(svg, "text", { x: 3, y: 170, fill: "#bbb" }, "2 Jan 2026");
  const times = ["16:30", "17:00", "17:30", "18:00", "18:30", "19:00", "19:30", "20:00", "20:30", "21:00", "21:30", "22:00", "22:30", "23:00", "23:30"];
  const nextDay = ["01:00", "01:30", "02:00", "02:30", "03:00", "03:30", "04:00", "04:30", "05:00", "05:30", "06:00", "06:30", "07:00"];
  const labels = times.map((t) => "2 Jan " + t).concat(nextDay.map((t) => "5 Jan " + t));
  labels.forEach((label, i) => {
    const x = candleX(-5 + i * 2);
    add(svg, "line", { x1: x, x2: x, y1: 160, y2: 165, stroke: "#bbb" });
    add(svg, "text", { x, y: 170, fill: "#bbb" }, label);
  });
}

/* ---- tester statistics charts ---- */

const GRADIENTS = {
  green: ["#8fd09a", "#0a6a1a"],
  red: ["#e8a08c", "#951e00"],
  mint: ["#a8dcbc", "#2a7f52"],
  teal: ["#8fd2e4", "#00627f"],
  blue: ["#a9c0e8", "#1b3e8e"],
  rust: ["#e0a090", "#9a2a08"]
};

const PLOT_TOP = 0.5;
const PLOT_H = 107;
const AXIS_X = 36;

function gradient(defs, id, name) {
  const grad = add(defs, "linearGradient", { id, gradientUnits: "userSpaceOnUse", x1: 0, x2: 0, y1: 0, y2: PLOT_H });
  add(grad, "stop", { offset: 0, "stop-color": GRADIENTS[name][0] });
  add(grad, "stop", { offset: 1, "stop-color": GRADIENTS[name][1] });
}

function drawChart(id, cfg) {
  const svg = document.getElementById(id);
  const defs = add(svg, "defs", {});
  const right = AXIS_X + cfg.pitch * cfg.cats.length;

  for (let i = 0; i <= 8; i++) {
    const y = PLOT_TOP + (PLOT_H / 8) * i;
    add(svg, "line", { class: "grid-line", x1: AXIS_X, x2: right, y1: y, y2: y });
  }
  add(svg, "line", { class: "axis-line", x1: AXIS_X, x2: AXIS_X, y1: 0, y2: PLOT_H + 5 });

  cfg.yLabels.forEach(([label, step]) => {
    add(svg, "text", { class: "axis-text", x: AXIS_X - 8, y: PLOT_TOP + (PLOT_H / 8) * step + 3, "text-anchor": "end" }, label);
  });

  cfg.cats.forEach((cat, i) => {
    const tick = AXIS_X + cfg.pitch * i;
    add(svg, "line", { class: "axis-line", x1: tick, x2: tick, y1: PLOT_H, y2: PLOT_H + 5 });
    // the lower row of charts runs under the tab bar, its labels never show
    if (!cfg.paired) {
      add(svg, "text", { class: "axis-text", x: tick + cfg.labelX, y: 119, "text-anchor": cfg.anchor }, cat);
    }
  });

  cfg.series.forEach((series, s) => {
    const gradId = id + "g" + s;
    gradient(defs, gradId, series.color);
    series.values.forEach((v, i) => {
      if (!v) return;
      const h = (v / cfg.max) * PLOT_H;
      const slot = series.slots ? series.slots[i] : i;
      add(svg, "rect", {
        class: "bar",
        x: AXIS_X + cfg.pitch * slot + cfg.offset + (cfg.paired ? s * cfg.barW : 0),
        y: PLOT_H - h + 0.5,
        width: cfg.barW,
        height: h,
        fill: "url(#" + gradId + ")"
      });
    });
  });
}

const HOURS = Array.from({ length: 24 }, (_, i) => String(i));
const DAYS = ["Sun", "Mon", "Tue", "Wed", "Thu", "Fri", "Sat"];
const MONTHS = ["Jan", "Feb", "Mar", "Apr", "May", "Jun", "Jul", "Aug", "Sep", "Oct", "Nov", "Dec"];

const hoursBase = { cats: HOURS, pitch: 19.33, labelX: 2.5, anchor: "start" };
const daysBase = { cats: DAYS, pitch: 64, labelX: 25, anchor: "middle" };
const monthsBase = { cats: MONTHS, pitch: 37.83, labelX: 17, anchor: "middle" };

drawMarket();

drawChart("chartHours", Object.assign({}, hoursBase, {
  max: 39, offset: 4.7, barW: 9.6,
  yLabels: [["39", 0], ["0", 8]],
  series: [
    { color: "green", slots: [12, 13, 14], values: [22, 31, 25] },
    { color: "red", slots: [15, 16], values: [39, 37] }
  ]
}));

drawChart("chartDays", Object.assign({}, daysBase, {
  max: 39, offset: 16.7, barW: 32.5,
  yLabels: [["39", 0], ["0", 8]],
  series: [{ color: "mint", values: [0, 34, 39, 27, 27, 27, 0] }]
}));

drawChart("chartMonths", Object.assign({}, monthsBase, {
  max: 24, offset: 8.8, barW: 19,
  yLabels: ["24", "21", "18", "15", "12", "9", "6", "3", "0"].map((l, i) => [l, i]),
  series: [{ color: "teal", values: [24, 22, 23, 21, 24, 21, 19] }]
}));

drawChart("plHours", Object.assign({}, hoursBase, {
  max: 150, offset: 2, barW: 7.3, paired: true,
  yLabels: [["150", 0], ["0", 8]],
  series: [
    { color: "blue", slots: [12, 13, 14, 15, 16], values: [37, 87, 65, 146, 59] },
    { color: "rust", slots: [12, 13, 14, 15, 16], values: [43, 46, 49, 54, 99] }
  ]
}));

drawChart("plDays", Object.assign({}, daysBase, {
  max: 120, offset: 16.4, barW: 16.6, paired: true,
  yLabels: [["120", 0], ["90", 2], ["60", 4], ["30", 6], ["0", 8]],
  series: [
    { color: "blue", values: [0, 117, 87.5, 65, 52, 74, 0] },
    { color: "rust", values: [0, 54, 74, 54, 56.5, 54, 0] }
  ]
}));

drawChart("plMonths", Object.assign({}, monthsBase, {
  max: 100, offset: 8.8, barW: 9.8, paired: true,
  yLabels: ["100", "87", "75", "62", "50", "37", "25", "12", "0"].map((l, i) => [l, i]),
  series: [
    { color: "blue", values: [58.6, 72, 79.5, 52, 36, 53.4, 43] },
    { color: "rust", values: [39, 42, 32.4, 33, 64, 39, 43] }
  ]
}));
```
